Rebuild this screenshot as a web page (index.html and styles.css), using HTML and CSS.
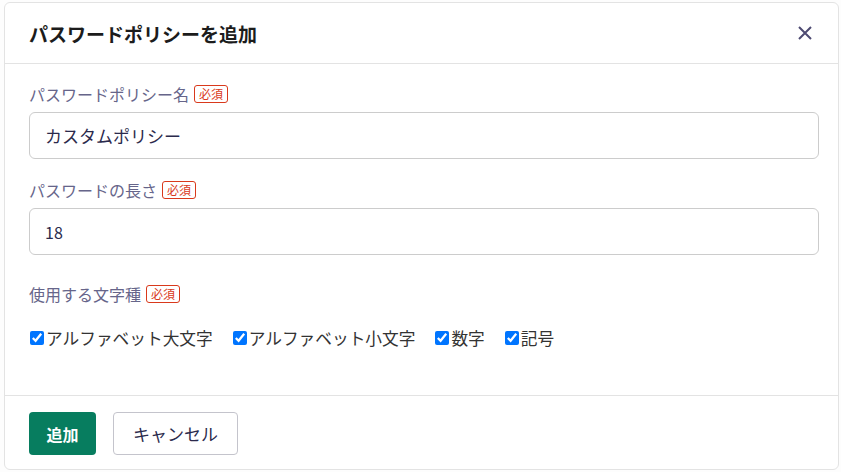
FILE: index.html
```html
<html lang="ja">
<head>
    <title>パスワードポリシーを追加</title>
    <meta charset="UTF-8">
    <meta name="viewport" content="width=device-width, initial-scale=1.0">
    <link rel="stylesheet" href="styles.css">
</head>
<body>
    <div class="modal">
        <div class="modalHeader">
            <h1 class="modalTitle">パスワードポリシーを追加</h1>
            <button class="closeButton" aria-label="閉じる">
                <svg width="14" height="14" viewBox="0 0 14 14">
                    <path d="M1 1 L13 13 M13 1 L1 13" stroke="#4d4a72" stroke-width="2" fill="none"/>
                </svg>
            </button>
        </div>

        <form class="modalBody">
            <div class="field">
                <label class="fieldLabel" for="policyName">パスワードポリシー名 <span class="required">必須</span></label>
                <input class="textInput" type="text" id="policyName" value="カスタムポリシー">
            </div>

            <div class="field">
                <label class="fieldLabel" for="length">パスワードの長さ <span class="required">必須</span></label>
                <input class="textInput smallText" type="text" id="length" value="18">
            </div>

            <div class="field charField">
                <span class="fieldLabel">使用する文字種 <span class="required">必須</span></span>
                <div class="checkRow">
                    <label class="checkItem"><input type="checkbox" checked>アルファベット大文字</label>
                    <label class="checkItem"><input type="checkbox" checked>アルファベット小文字</label>
                    <label class="checkItem"><input type="checkbox" checked>数字</label>
                    <label class="checkItem"><input type="checkbox" checked>記号</label>
                </div>
            </div>
        </form>

        <div class="modalFooter">
            <button class="primaryButton">追加</button>
            <button class="secondaryButton">キャンセル</button>
        </div>
    </div>
</body>
</html>
```

FILE: styles.css
```css
body {
    margin: 0;
    background-color: #fdfdfd;
    font-family: "Noto Sans CJK JP", "Noto Sans", sans-serif;
}

.modal {
    margin: 2px 2px 0 4px;
    height: 468px;
    background-color: #ffffff;
    border: 1px solid #e3e3e3;
    border-radius: 6px;
    display: flex;
    flex-direction: column;
    box-sizing: border-box;
}

.modalHeader {
    height: 60px;
    display: flex;
    align-items: center;
    justify-content: space-between;
    padding: 0 26px 0 24px;
    border-bottom: 1px solid #e3e3e3;
}

.modalTitle {
    margin: 0;
    font-size: 19px;
    font-weight: bold;
    color: #1c1c1c;
}

.closeButton {
    border: none;
    background: none;
    padding: 0;
    width: 14px;
    height: 14px;
    cursor: pointer;
}

.modalBody {
    flex: 1;
    margin: 0;
    padding: 18px 19px 0 24px;
}

.field {
    display: flex;
    flex-direction: column;
    gap: 6px;
    margin-bottom: 19px;
}

.fieldLabel {
    display: flex;
    align-items: center;
    gap: 5px;
    font-size: 16px;
    line-height: 24px;
    color: #66658a;
}

.required {
    display: inline-block;
    font-size: 12px;
    line-height: 16px;
    padding: 0 4px;
    color: #d9391c;
    border: 1px solid #d9391c;
    border-radius: 3px;
}

.textInput {
    height: 47px;
    box-sizing: border-box;
    padding: 0 15px;
    font-family: "Noto Sans CJK JP", "Noto Sans", sans-serif;
    font-size: 17px;
    color: #2b2a4c;
    border: 1px solid #cccccc;
    border-radius: 6px;
    outline: none;
}

.smallText {
    font-size: 16px;
}

.charField {
    margin-top: 27px;
    gap: 20px;
}

.checkRow {
    display: flex;
    gap: 19px;
}

.checkItem {
    display: flex;
    align-items: center;
    font-size: 16.7px;
    color: #333333;
}

.checkItem input {
    margin: 0 2px 0 1px;
    width: 14px;
    height: 14px;
}

.modalFooter {
    border-top: 1px solid #e3e3e3;
    padding: 16px 24px 14px 24px;
    display: flex;
    gap: 17px;
}

.primaryButton {
    height: 43px;
    width: 67px;
    padding: 0;
    font-family: "Noto Sans CJK JP", "Noto Sans", sans-serif;
    font-size: 16px;
    font-weight: bold;
    color: #ffffff;
    background-color: #077d5f;
    border: none;
    border-radius: 4px;
    cursor: pointer;
}

.secondaryButton {
    height: 43px;
    padding: 0 19px;
    font-family: "Noto Sans CJK JP", "Noto Sans", sans-serif;
    font-size: 17px;
    color: #2b2a4c;
    background-color: #ffffff;
    border: 1px solid #c4c4cc;
    border-radius: 4px;
    cursor: pointer;
}
```
